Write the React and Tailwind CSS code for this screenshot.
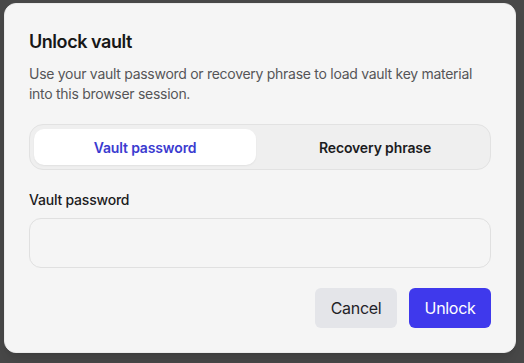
import React, { useState } from 'react';

export default function App() {
  const [mode, setMode] = useState('password');
  const [password, setPassword] = useState('');

  const tabClass = (active) =>
    active
      ? 'h-9 rounded-[10px] bg-white text-[14px] font-semibold tracking-[-0.01em] text-[#3b3bd0] shadow-[0_1px_2px_rgba(0,0,0,0.06)]'
      : 'h-9 rounded-[10px] text-[14px] font-semibold tracking-[-0.01em] text-[#1c1c1e]';

  return (
    <div
      className="h-[363px] w-[524px] bg-[#484848] pl-1 pt-[3px]"
      style={{ fontFamily: 'Inter, "Noto Sans", sans-serif' }}
    >
      <div className="w-[512px] rounded-xl border border-[#ebebeb] bg-[#f5f5f5] p-6 shadow-lg">
        {/* Header */}
        <h2 className="text-[18px] leading-7 font-semibold tracking-[-0.025em] text-[#171717]">Unlock vault</h2>
        <p className="mt-2 text-[14px] leading-5 tracking-[-0.02em] text-[#555558]">
          Use your vault password or recovery phrase to load vault key material into this browser session.
        </p>

        {/* Mode switch */}
        <div className="mt-5 grid grid-cols-2 gap-2 rounded-[14px] border border-[#e2e2e2] bg-[#efefef] p-1">
          <button type="button" className={tabClass(mode === 'password')} onClick={() => setMode('password')}>
            Vault password
          </button>
          <button type="button" className={tabClass(mode === 'phrase')} onClick={() => setMode('phrase')}>
            Recovery phrase
          </button>
        </div>

        {/* Field */}
        <label className="mt-5 block text-[14px] leading-5 font-medium tracking-[-0.015em] text-[#1c1c1e]">
          {mode === 'password' ? 'Vault password' : 'Recovery phrase'}
        </label>
        <input
          type="password"
          value={password}
          onChange={(e) => setPassword(e.target.value)}
          className="mt-2 block h-[50px] w-full rounded-xl border border-[#e0e0e0] bg-[#f5f5f5] px-4 text-[15px] outline-none"
        />

        {/* Actions */}
        <div className="mt-5 flex justify-end gap-3">
          <button type="button" className="h-10 w-[82px] rounded-md bg-[#e4e5e9] text-[16px] tracking-[-0.02em] text-[#1f2228]">
            Cancel
          </button>
          <button type="button" className="h-10 w-[82px] rounded-md bg-[#3f39ec] text-[16px] tracking-[-0.02em] text-white">
            Unlock
          </button>
        </div>
      </div>
    </div>
  );
}
